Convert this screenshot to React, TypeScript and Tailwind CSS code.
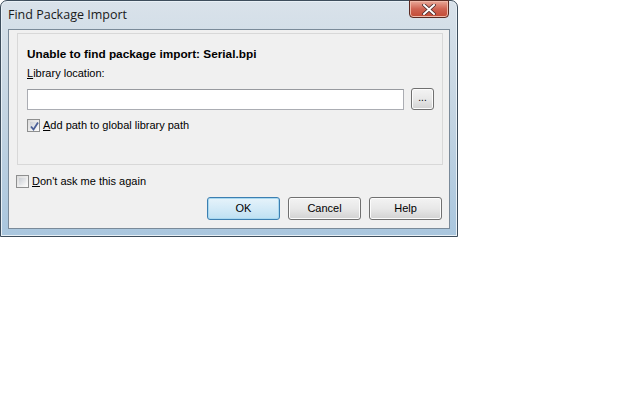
import React from 'react';

function CheckBox({ checked }: { checked: boolean }) {
  return (
    <div className="w-[13px] h-[13px] border border-[#8e8f8f] bg-gradient-to-br from-[#dcdcdc] to-[#fbfbfb] p-[2px] shrink-0">
      <div className="w-full h-full bg-gradient-to-br from-[#cbcfd5] to-[#f6f6f6] relative">
        {checked && (
          <svg width="11" height="11" viewBox="0 0 11 11" className="absolute -left-[1px] -top-[1px]">
            <path d="M2 5.5 L4.5 8.5 L9 1.5" fill="none" stroke="#4a5f97" strokeWidth="1.8" />
          </svg>
        )}
      </div>
    </div>
  );
}

function VistaButton({ label, isDefault }: { label: string; isDefault?: boolean }) {
  return (
    <button
      className={
        'w-[73px] h-[23px] rounded-[3px] border text-[11px] text-black flex items-center justify-center ' +
        (isDefault
          ? 'border-[#3c7fb1] bg-gradient-to-b from-[#e6f3fa] via-[#d3eaf7] to-[#bde0f2] shadow-[inset_0_0_0_1px_#a8d8f0]'
          : 'border-[#707070] bg-gradient-to-b from-[#f3f3f3] via-[#e8e8e8] to-[#d2d2d2] shadow-[inset_0_0_0_1px_#fcfcfc]')
      }
    >
      {label}
    </button>
  );
}

export default function App() {
  return (
    <div
      className="w-[640px] h-[400px] bg-white text-black"
      style={{ fontFamily: '"Liberation Sans", Arial, sans-serif' }}
    >
      {/* Window frame */}
      <div className="w-[458px] h-[237px] rounded-t-[7px] border border-[#3d4d5c] bg-gradient-to-b from-[#d9e2ea] via-[#c3d4e2] to-[#a9c6de] flex flex-col shadow-[inset_0_0_0_1px_#e8f0f6]">
        {/* Title bar */}
        <div className="h-[28px] flex items-start justify-between pl-[7px] pr-[8px]">
          <span className="mt-[5px] text-[12.5px] text-[#1a1a1a]" style={{ fontFamily: '"Open Sans", "Noto Sans", sans-serif' }}>
            Find Package Import
          </span>
          <div className="w-[40px] h-[18px] -mt-[1px] rounded-b-[4px] border border-[#5a2a22] bg-gradient-to-b from-[#e9a999] via-[#cf6352] to-[#c24a34] flex items-center justify-center shadow-[inset_0_0_0_1px_#f0b8a8]">
            <svg width="14" height="11" viewBox="0 0 14 11">
              <path d="M2 1 L12 10 M12 1 L2 10" stroke="#4a2a2a" strokeWidth="3.6" strokeLinecap="square" />
              <path d="M2 1 L12 10 M12 1 L2 10" stroke="#ffffff" strokeWidth="2" strokeLinecap="square" />
            </svg>
          </div>
        </div>

        {/* Client area */}
        <div className="mx-[7px] h-[200px] border border-[#7a8a99] bg-[#f0f0f0] flex flex-col">
          {/* Group panel */}
          <div className="mt-[3px] ml-[8px] w-[426px] h-[132px] border border-[#d8d8d8] pl-[9px] pt-[12px] flex flex-col">
            <div className="text-[11.8px] font-bold leading-[16px]">Unable to find package import: Serial.bpi</div>
            <div className="mt-[4px] text-[11px] leading-[15px]">
              <span className="underline">L</span>ibrary location:
            </div>
            <div className="mt-[7px] flex items-center gap-[7px]">
              <div className="w-[377px] h-[21px] border border-[#abadb3] border-t-[#979a9f] bg-white" />
              <button className="w-[23px] h-[22px] rounded-[3px] border border-[#707070] bg-gradient-to-b from-[#f3f3f3] via-[#e8e8e8] to-[#d2d2d2] shadow-[inset_0_0_0_1px_#fcfcfc] flex items-center justify-center text-[10px] leading-none pb-[2px]">
                ...
              </button>
            </div>
            <div className="mt-[7px] flex items-center gap-[3px] text-[11px]">
              <CheckBox checked />
              <span>
                <span className="underline">A</span>dd path to global library path
              </span>
            </div>
          </div>

          {/* Don't ask */}
          <div className="mt-[8px] ml-[7px] flex items-center gap-[3px] text-[11px]">
            <CheckBox checked={false} />
            <span>
              <span className="underline">D</span>on't ask me this again
            </span>
          </div>

          {/* Buttons */}
          <div className="mt-[7px] mr-[7px] flex justify-end gap-[8px]">
            <VistaButton label="OK" isDefault />
            <VistaButton label="Cancel" />
            <VistaButton label="Help" />
          </div>
        </div>
      </div>
    </div>
  );
}
